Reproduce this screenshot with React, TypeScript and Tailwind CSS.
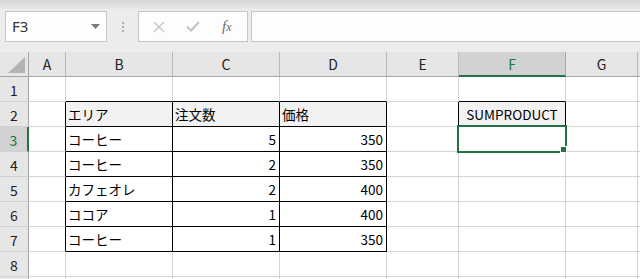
import React from "react";

const W = [
  "w-[29px]",
  "w-[37px]",
  "w-[107px]",
  "w-[107px]",
  "w-[107px]",
  "w-[72px]",
  "w-[107px]",
  "w-[72px]",
  "w-[2px]",
];

type CellDef = {
  text?: string;
  align?: "left" | "right" | "center";
  bg?: boolean;
  rBlack?: boolean;
  bBlack?: boolean;
  selected?: boolean;
};

function Cell({ w, def }: { w: string; def: CellDef }) {
  const align =
    def.align === "right"
      ? "justify-end pr-[3px]"
      : def.align === "center"
      ? "justify-center"
      : "justify-start pl-[2px]";
  return (
    <div
      className={[
        "relative shrink-0 h-full border-r border-b flex items-center whitespace-nowrap",
        w,
        align,
        def.rBlack ? "border-r-black" : "border-r-[#d4d4d4]",
        def.bBlack ? "border-b-black" : "border-b-[#d4d4d4]",
        def.bg ? "bg-[#f2f2f2]" : "bg-white",
      ].join(" ")}
    >
      {def.text && <span className="leading-none pt-[1px]">{def.text}</span>}
      {def.selected && (
        <div className="absolute -left-[2px] -top-[2px] w-[110px] h-[28px] border-2 border-[#217346] z-10">
          <div className="absolute left-[101px] top-[19px] w-[7px] h-[7px] bg-[#217346] border border-white" />
        </div>
      )}
    </div>
  );
}

function RowHeader({ n, selected }: { n: number; selected?: boolean }) {
  return (
    <div
      className={[
        "shrink-0 h-full w-[29px] border-b border-b-[#d0d0d0] flex items-center justify-center",
        selected
          ? "bg-[#d2d2d2] border-r-2 border-r-[#217346] text-[#217346]"
          : "bg-[#e6e6e6] border-r border-r-[#a6a6a6] text-[#222]",
      ].join(" ")}
    >
      {n < 9 && <span className="text-[14px] leading-none pt-[1px]">{n}</span>}
    </div>
  );
}

const rows: { n: number; cells: CellDef[] }[] = [
  {
    n: 1,
    cells: [
      {},
      { bBlack: true },
      { bBlack: true },
      { bBlack: true },
      {},
      { bBlack: true },
      {},
      {},
    ],
  },
  {
    n: 2,
    cells: [
      { rBlack: true },
      { text: "エリア", bg: true, rBlack: true, bBlack: true },
      { text: "注文数", bg: true, rBlack: true, bBlack: true },
      { text: "価格", bg: true, rBlack: true, bBlack: true },
      { rBlack: true },
      { text: "SUMPRODUCT", align: "center", bg: true, rBlack: true, bBlack: true },
      {},
      {},
    ],
  },
  {
    n: 3,
    cells: [
      { rBlack: true },
      { text: "コーヒー", rBlack: true, bBlack: true },
      { text: "5", align: "right", rBlack: true, bBlack: true },
      { text: "350", align: "right", rBlack: true, bBlack: true },
      {},
      { selected: true },
      {},
      {},
    ],
  },
  {
    n: 4,
    cells: [
      { rBlack: true },
      { text: "コーヒー", rBlack: true, bBlack: true },
      { text: "2", align: "right", rBlack: true, bBlack: true },
      { text: "350", align: "right", rBlack: true, bBlack: true },
      {},
      {},
      {},
      {},
    ],
  },
  {
    n: 5,
    cells: [
      { rBlack: true },
      { text: "カフェオレ", rBlack: true, bBlack: true },
      { text: "2", align: "right", rBlack: true, bBlack: true },
      { text: "400", align: "right", rBlack: true, bBlack: true },
      {},
      {},
      {},
      {},
    ],
  },
  {
    n: 6,
    cells: [
      { rBlack: true },
      { text: "ココア", rBlack: true, bBlack: true },
      { text: "1", align: "right", rBlack: true, bBlack: true },
      { text: "400", align: "right", rBlack: true, bBlack: true },
      {},
      {},
      {},
      {},
    ],
  },
  {
    n: 7,
    cells: [
      { rBlack: true },
      { text: "コーヒー", rBlack: true, bBlack: true },
      { text: "1", align: "right", rBlack: true, bBlack: true },
      { text: "350", align: "right", rBlack: true, bBlack: true },
      {},
      {},
      {},
      {},
    ],
  },
  { n: 8, cells: [{}, {}, {}, {}, {}, {}, {}, {}] },
  { n: 9, cells: [{}, {}, {}, {}, {}, {}, {}, {}] },
];

const colLetters = ["A", "B", "C", "D", "E", "F", "G"];

export default function App() {
  return (
    <div className="w-[640px] h-[279px] overflow-hidden bg-[#ececec] font-['Noto_Sans_CJK_JP','Noto_Sans',sans-serif] text-[13.5px] text-black">
      {/* top gradient */}
      <div className="h-[10px] bg-gradient-to-b from-[#d6d6d6] to-[#ececec]" />
      {/* toolbar */}
      <div className="h-[42px] flex items-start pt-[1px] pl-[5px]">
        <div className="w-[102px] h-[31px] bg-[#fdfdfd] border border-[#c6c6c6] flex items-center justify-between pl-[6px] pr-[6px]">
          <span className="text-[15px] text-[#333] font-['Noto_Sans',sans-serif] leading-none">F3</span>
          <svg width="9" height="5" viewBox="0 0 9 5">
            <path d="M0 0 L9 0 L4.5 5 Z" fill="#7a7a7a" />
          </svg>
        </div>
        <div className="w-[31px] h-[31px] flex flex-col items-center justify-center gap-[2px]">
          <div className="w-[2px] h-[2px] bg-[#b0b0b0]" />
          <div className="w-[2px] h-[2px] bg-[#b0b0b0]" />
          <div className="w-[2px] h-[2px] bg-[#b0b0b0]" />
        </div>
        <div className="w-[110px] h-[31px] bg-[#fdfdfd] border border-[#c6c6c6] flex items-center pl-[14px]">
          <svg width="12" height="12" viewBox="0 0 12 12" className="mr-[21px]">
            <path d="M1 1 L11 11 M11 1 L1 11" stroke="#c3c3c3" strokeWidth="1.3" />
          </svg>
          <svg width="14" height="11" viewBox="0 0 14 11" className="mr-[22px]">
            <path d="M1 5.5 L5 9.5 L13 1" stroke="#c3c3c3" strokeWidth="2" fill="none" />
          </svg>
          <span className="font-['Liberation_Serif',serif] italic text-[#6b6b6b] text-[15px] leading-none">
            f<span className="text-[12px]">x</span>
          </span>
        </div>
        <div className="ml-[3px] flex-1 h-[31px] bg-[#fdfdfd] border border-[#c6c6c6] border-r-0" />
      </div>
      {/* column header */}
      <div className="h-[25px] flex">
        <div className="shrink-0 w-[29px] h-full border-r border-b border-r-[#a6a6a6] border-b-[#a6a6a6] bg-[#e6e6e6] relative">
          <svg width="17" height="16" viewBox="0 0 17 16" className="absolute left-[8px] top-[5px]">
            <path d="M17 0 L17 16 L0 16 Z" fill="#b4b4b4" />
          </svg>
        </div>
        {colLetters.map((c, i) =>
          c === "F" ? (
            <div
              key={c}
              className={[
                "shrink-0 h-full border-r border-r-[#a6a6a6] border-b-2 border-b-[#217346] bg-[#d2d2d2] text-[#217346] flex items-center justify-center",
                W[i + 1],
              ].join(" ")}
            >
              <span className="text-[14px] leading-none">{c}</span>
            </div>
          ) : (
            <div
              key={c}
              className={[
                "shrink-0 h-full border-r border-r-[#b8b8b8] border-b border-b-[#a6a6a6] bg-[#e6e6e6] text-[#222] flex items-center justify-center",
                W[i + 1],
              ].join(" ")}
            >
              <span className="text-[14px] leading-none">{c}</span>
            </div>
          )
        )}
        <div className="flex-1 h-full border-b border-b-[#a6a6a6] bg-[#e6e6e6]" />
      </div>
      {/* grid rows */}
      {rows.map((r) => (
        <div key={r.n} className="h-[25px] flex">
          <RowHeader n={r.n} selected={r.n === 3} />
          {r.cells.map((c, i) => (
            <Cell key={i} w={W[i + 1]} def={c} />
          ))}
          <div className="flex-1 h-full bg-white border-b border-b-[#d4d4d4]" />
        </div>
      ))}
    </div>
  );
}
